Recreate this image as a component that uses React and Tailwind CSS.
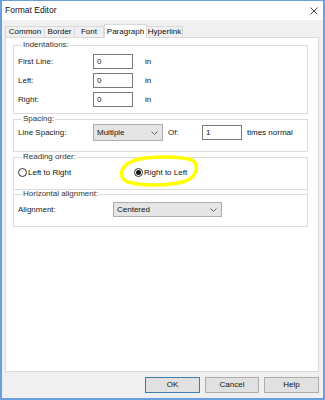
const font = "font-['Segoe_UI','Liberation_Sans',Arial,sans-serif]";

function Chevron() {
  return (
    <svg width="7" height="4" viewBox="0 0 7 4" className="shrink-0">
      <path d="M0.5 0.5 L3.5 3.5 L6.5 0.5" fill="none" stroke="#555" strokeWidth="0.9" />
    </svg>
  );
}

function TextBox({ value, className = "" }) {
  return (
    <div className={`h-[15px] w-[40px] bg-white border border-[#7a7a7a] pl-[3px] flex items-center ${className}`}>
      {value}
    </div>
  );
}

function Select({ value, width }) {
  return (
    <div
      className="h-[17px] bg-[#e5e5e5] border border-[#adadad] pl-[3px] pr-[4px] flex items-center justify-between"
      style={{ width }}
    >
      <span>{value}</span>
      <Chevron />
    </div>
  );
}

function Group({ title, className = "", children }) {
  return (
    <fieldset className={`border border-[#dcdcdc] px-[4px] ${className}`}>
      <legend className="ml-[4px] px-[1px] leading-[10px] text-[#333]">{title}</legend>
      {children}
    </fieldset>
  );
}

function Radio({ checked, label }) {
  return (
    <div className="flex items-center gap-[1px] h-[11px]">
      <span className="w-[9px] h-[9px] rounded-full border border-[#333] bg-white flex items-center justify-center">
        {checked && <span className="w-[5px] h-[5px] rounded-full bg-[#111]" />}
      </span>
      <span>{label}</span>
    </div>
  );
}

const tabs = [
  { name: "Common", w: 40 },
  { name: "Border", w: 31 },
  { name: "Font", w: 30 },
  { name: "Paragraph", w: 43, active: true },
  { name: "Hyperlink", w: 37 },
];

export default function App() {
  return (
    <div className={`w-[325px] h-[400px] flex flex-col bg-[#f0f0f0] border-2 border-t border-[#6c9fdf] text-[8px] text-[#111] ${font} overflow-hidden`}>
      {/* title bar */}
      <div className="h-[19px] bg-white flex items-center justify-between pl-[3px] pr-[5px] shrink-0">
        <span className="text-[8.5px]">Format Editor</span>
        <svg width="8" height="8" viewBox="0 0 8 8">
          <path d="M0.5 0.5 L7.5 7.5 M7.5 0.5 L0.5 7.5" stroke="#333" strokeWidth="0.9" />
        </svg>
      </div>

      <div className="flex-1 flex flex-col pl-[3px] pr-[4px] pt-[4px]">
        {/* tabs */}
        <div className="flex items-end h-[13px] relative z-10">
          {tabs.map((t) =>
            t.active ? (
              <div
                key={t.name}
                className="h-[14px] -mb-px bg-white border border-b-0 border-[#d9d9d9] flex items-center justify-center"
                style={{ width: t.w }}
              >
                {t.name}
              </div>
            ) : (
              <div
                key={t.name}
                className="h-[11px] bg-[#f0f0f0] border border-b-0 border-[#d9d9d9] -ml-px first:ml-0 flex items-center justify-center"
                style={{ width: t.w }}
              >
                {t.name}
              </div>
            )
          )}
        </div>

        {/* panel */}
        <div className="flex-1 bg-white border border-[#d9d9d9] pl-[7px] pt-[2px] relative">
          <div className="w-[295px] flex flex-col">
            <Group title="Indentations:" className="pt-[4px] pb-[6px]">
              <div className="flex flex-col gap-[4px]">
                {["First Line:", "Left:", "Right:"].map((l) => (
                  <div key={l} className="flex items-center h-[15px]">
                    <span className="w-[75px] text-[#222]">{l}</span>
                    <TextBox value="0" />
                    <span className="ml-[12px]">in</span>
                  </div>
                ))}
              </div>
            </Group>

            <Group title="Spacing:" className="pt-0 pb-[10px]">
              <div className="flex items-center h-[17px]">
                <span className="w-[75px] text-[#222]">Line Spacing:</span>
                <Select value="Multiple" width={70} />
                <span className="ml-[5px] w-[34px] text-[#222]">Of:</span>
                <TextBox value="1" />
                <span className="ml-[5px]">times normal</span>
              </div>
            </Group>

            <Group title="Reading order:" className="pt-[5px] pb-[11px]">
              <div className="flex items-center">
                <div className="w-[116px]">
                  <Radio label="Left to Right" />
                </div>
                <Radio checked label="Right to Left" />
              </div>
            </Group>

            <Group title="Horizontal alignment:" className="-mt-px pt-[3px] pb-[9px]">
              <div className="flex items-center h-[15px]">
                <span className="w-[95px] text-[#222]">Alignment:</span>
                <div className="h-[15px] w-[109px] bg-[#e5e5e5] border border-[#adadad] pl-[3px] pr-[4px] flex items-center justify-between">
                  <span>Centered</span>
                  <Chevron />
                </div>
              </div>
            </Group>
          </div>

          {/* yellow hand-drawn highlight */}
          <svg
            className="absolute pointer-events-none"
            style={{ left: 112, top: 117 }}
            width="90"
            height="34"
            viewBox="0 0 90 34"
          >
            <path
              d="M16 5 C32 1, 62 1, 74 5 C81 9, 80 21, 68 26 C52 31, 24 31, 10 27 C2 24, 2 16, 7 11 C12 6, 20 4, 28 3"
              fill="none"
              stroke="#ffff00"
              strokeWidth="3.5"
              strokeLinecap="round"
            />
          </svg>
        </div>

        {/* buttons */}
        <div className="h-[26px] flex items-center justify-end gap-[5px] shrink-0">
          <button className="w-[55px] h-[16px] bg-[#e1e1e1] border border-[#3c7fb1] text-center">OK</button>
          <button className="w-[54px] h-[16px] bg-[#e1e1e1] border border-[#adadad] text-center">Cancel</button>
          <button className="w-[55px] h-[16px] bg-[#e1e1e1] border border-[#adadad] text-center">Help</button>
        </div>
      </div>
    </div>
  );
}
